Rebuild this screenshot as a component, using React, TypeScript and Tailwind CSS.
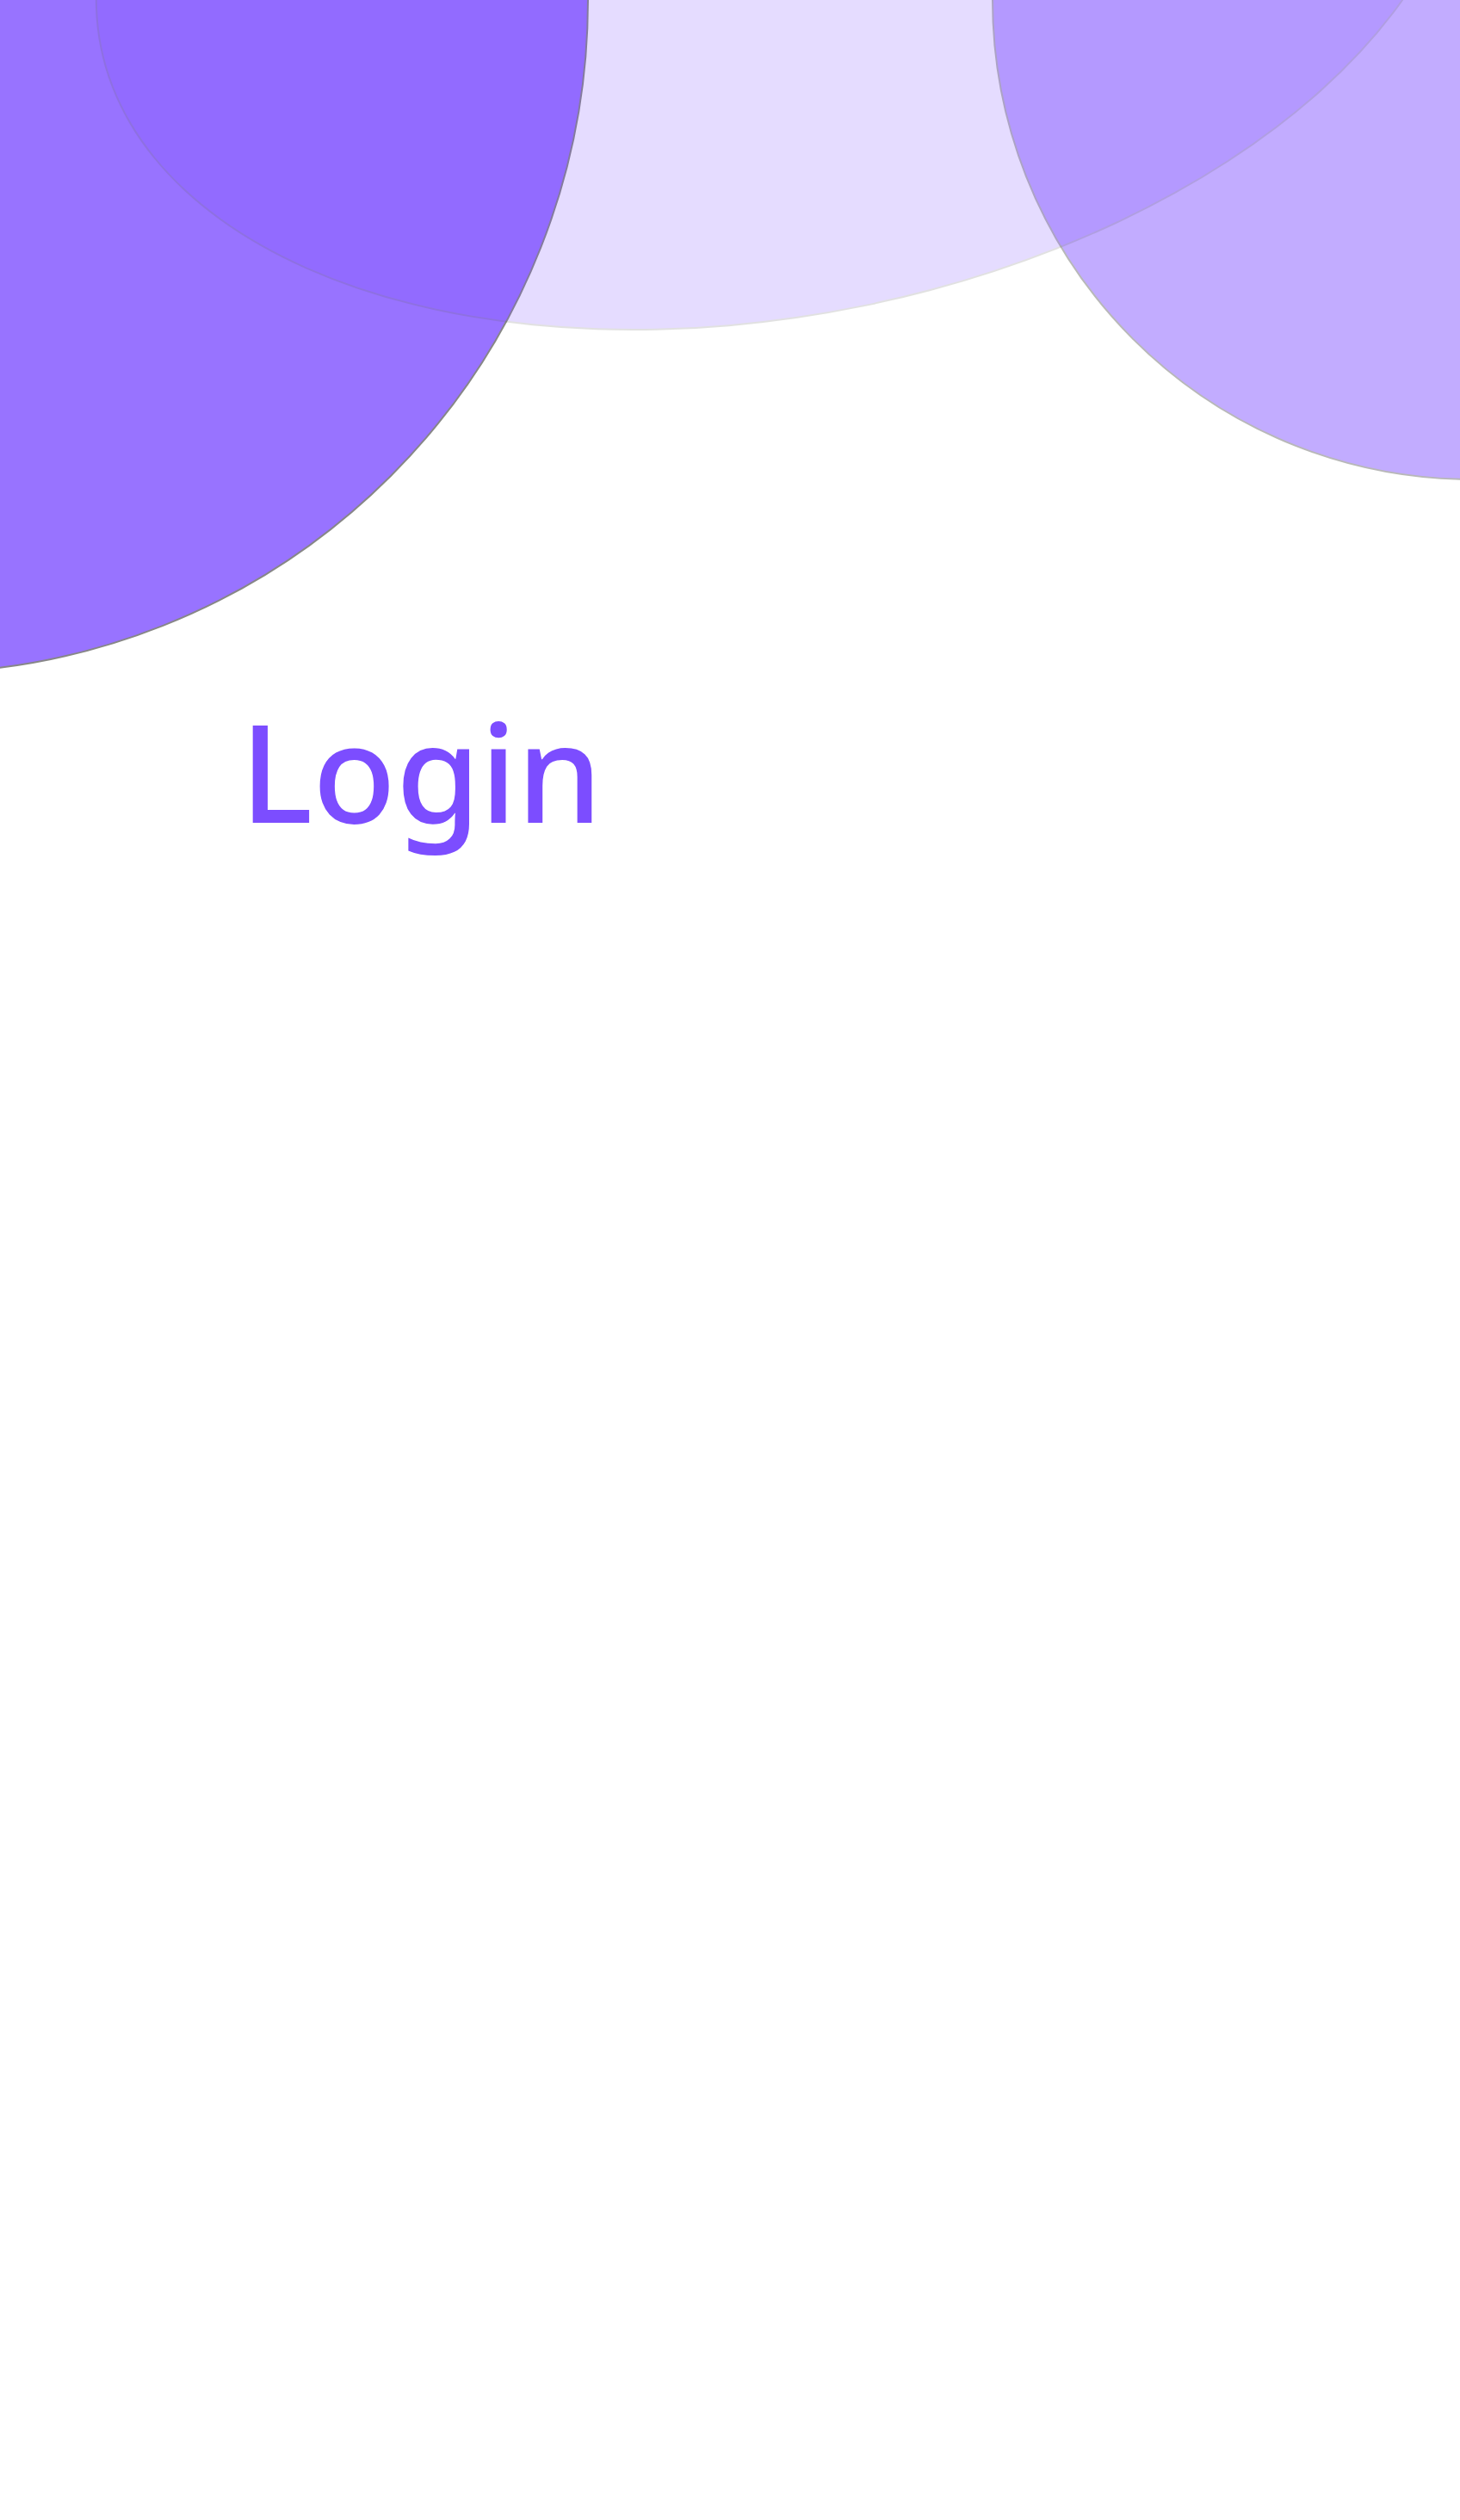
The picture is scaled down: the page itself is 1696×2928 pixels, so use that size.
export default function App() {
  return (
    <div className="relative min-h-screen w-full overflow-hidden bg-white font-['Noto_Sans',sans-serif]">
      {/* background blobs */}
      <div className="pointer-events-none absolute left-[-882px] top-[-783px] h-[1566px] w-[1566px] rounded-full border-2 border-[#666666] bg-[#7c4dff] opacity-[0.78]" />
      <div className="pointer-events-none absolute left-[1152px] top-[-558px] h-[1116px] w-[1116px] rounded-full border-2 border-[#666666] bg-[#7c4dff] opacity-[0.46]" />
      <div className="pointer-events-none absolute left-[100px] top-[-579px] h-[945px] w-[1616px] -rotate-[11.6deg] rounded-[50%] border-2 border-[#666666] bg-[#7c4dff] opacity-[0.19]" />

      <main className="relative px-[279px] pt-[816px]">
        <h1 className="text-[158px] font-medium leading-none text-[#7c4dff]">Login</h1>
      </main>
    </div>
  );
}
